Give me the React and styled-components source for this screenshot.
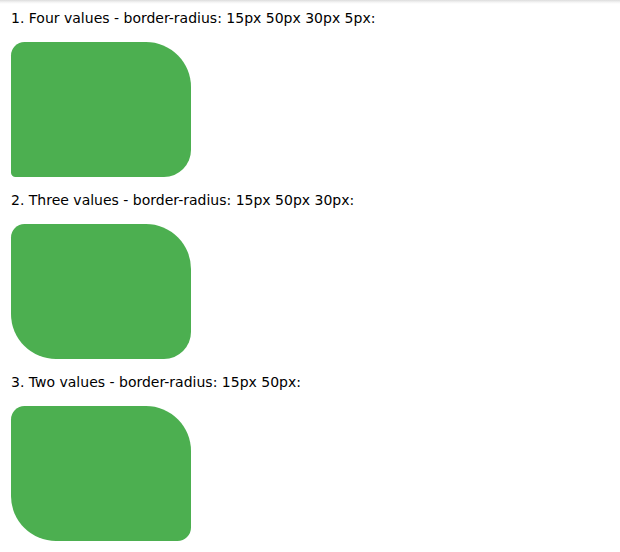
import React from "react";
import styled, { createGlobalStyle } from "styled-components";

const GlobalStyle = createGlobalStyle`
  html {
    background: linear-gradient(#dcdcdc, #f2f2f2 2px, #fff 4px) no-repeat;
    background-color: #fff;
  }
  body {
    margin: 0;
    padding: 0 11px;
    font-family: "DejaVu Sans", Verdana, sans-serif;
    font-size: 14px;
    color: #000;
  }
`;

const Page = styled.div`
  display: flex;
  flex-direction: column;
  padding-top: 9px;
`;

const Label = styled.p`
  margin: 0;
  height: 18px;
  line-height: 18px;
`;

const Box = styled.div`
  width: 180px;
  height: 135px;
  margin: 15px 0 14px;
  background: #4caf50;
  border-radius: ${(p) => p.radius};
`;

const demos = [
  {
    label: "1. Four values - border-radius: 15px 50px 30px 5px:",
    radius: "13.5px 45px 27px 4.5px",
  },
  {
    label: "2. Three values - border-radius: 15px 50px 30px:",
    radius: "13.5px 45px 27px",
  },
  {
    label: "3. Two values - border-radius: 15px 50px:",
    radius: "13.5px 45px",
  },
];

export default function App() {
  return (
    <>
      <GlobalStyle />
      <Page>
        {demos.map((d) => (
          <React.Fragment key={d.label}>
            <Label>{d.label}</Label>
            <Box radius={d.radius} />
          </React.Fragment>
        ))}
      </Page>
    </>
  );
}
